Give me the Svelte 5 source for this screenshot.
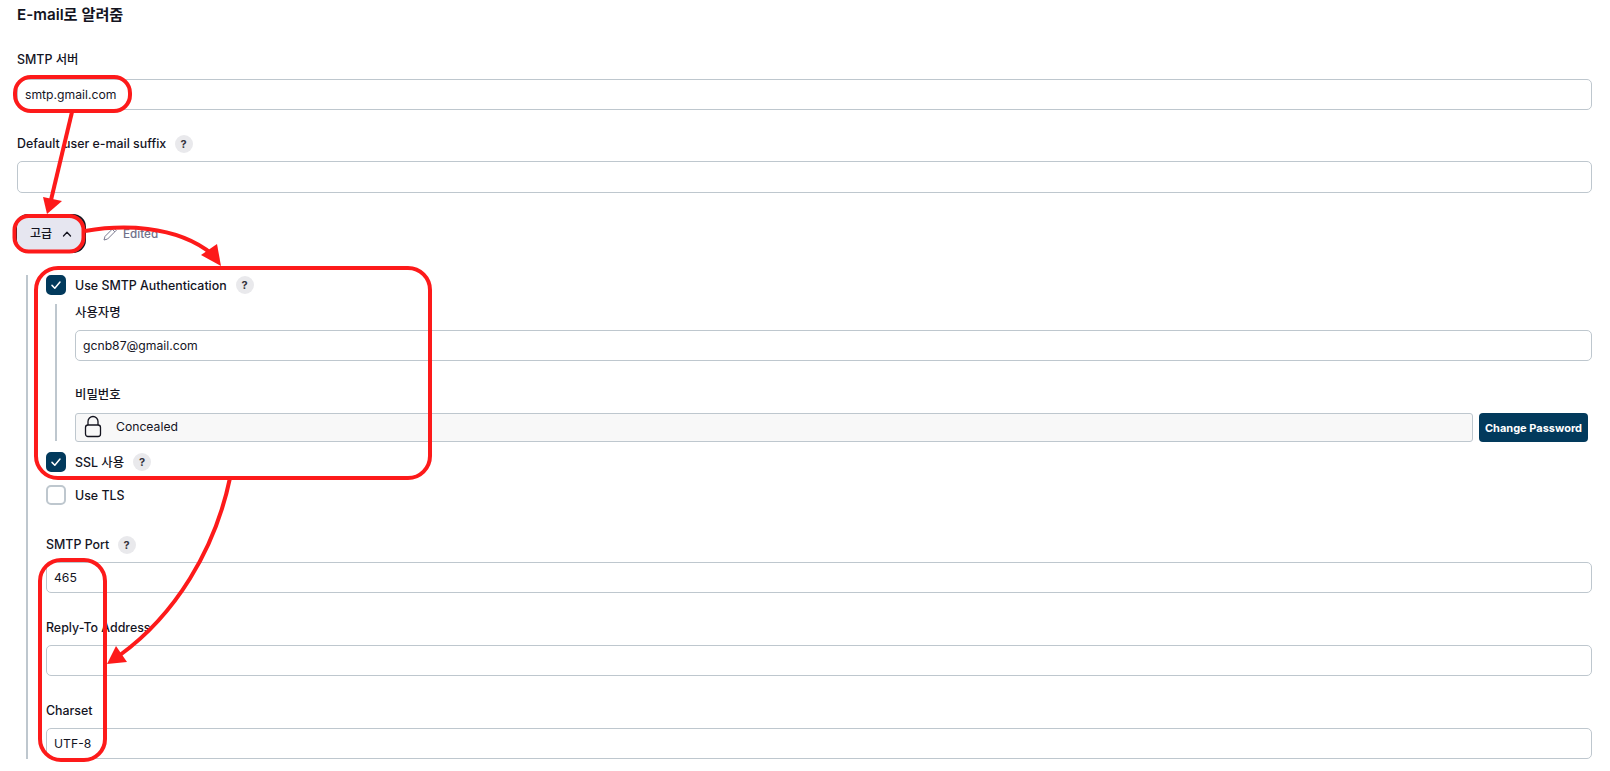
<script lang="ts">
	type Field = { label: string; value: string; help?: boolean };

	const lowerFields: Field[] = [
		{ label: 'SMTP Port', value: '465', help: true },
		{ label: 'Reply-To Address', value: '' },
		{ label: 'Charset', value: 'UTF-8' }
	];
</script>

{#snippet help()}
	<span class="help">?</span>
{/snippet}

{#snippet check(on: boolean, label: string, hasHelp: boolean)}
	<div class="check-row">
		<span class="box" class:on>
			{#if on}
				<svg width="12" height="12" viewBox="0 0 12 12"><path d="M2 6.4 4.8 9.2 10 3" fill="none" stroke="#fff" stroke-width="1.5" stroke-linecap="round" stroke-linejoin="round" /></svg>
			{/if}
		</span>
		<span class="check-label">{label}</span>
		{#if hasHelp}{@render help()}{/if}
	</div>
{/snippet}

<main class="page">
	<h2>E-mail로 알려줌</h2>

	<div class="label first">SMTP 서버</div>
	<div class="input">smtp.gmail.com</div>

	<div class="label suffix">Default user e-mail suffix {@render help()}</div>
	<div class="input tall"></div>

	<div class="adv-row">
		<button class="adv"><span class="adv-text">고급</span>
			<svg width="10" height="10" viewBox="0 0 10 10"><path d="M1.5 7 5 3.3 8.5 7" fill="none" stroke="#14141f" stroke-width="1.3" stroke-linecap="round" stroke-linejoin="round" /></svg>
		</button>
		<span class="edited">
			<svg width="16" height="16" viewBox="0 0 16 16"><path d="M2 14 3 10.4 11.6 1.8 14.2 4.4 5.6 13Z M10.2 3.2 12.8 5.8" fill="none" stroke="#7a7a90" stroke-width="1" stroke-linejoin="round" /></svg>
			Edited
		</span>
	</div>

	<section class="advanced">
		{@render check(true, 'Use SMTP Authentication', true)}
		<div class="auth">
			<div class="label">사용자명</div>
			<div class="input">gcnb87@gmail.com</div>
			<div class="label pw-label">비밀번호</div>
			<div class="pw-row">
				<div class="concealed">
					<svg width="20" height="24" viewBox="0 0 20 24"><path d="M5 11V7.5a5 5 0 0 1 10 0V11" fill="none" stroke="#14141f" stroke-width="1.3" /><rect x="2.5" y="11" width="15" height="11.5" rx="2.5" fill="none" stroke="#14141f" stroke-width="1.3" /></svg>
					<span>Concealed</span>
				</div>
				<button class="change">Change Password</button>
			</div>
		</div>
		<div class="ssl">{@render check(true, 'SSL 사용', true)}</div>
		<div class="tls">{@render check(false, 'Use TLS', false)}</div>

		<div class="lower">
			{#each lowerFields as f (f.label)}
				<div class="field">
					<div class="label">{f.label} {#if f.help}{@render help()}{/if}</div>
					<div class="input">{f.value}</div>
				</div>
			{/each}
		</div>
	</section>

	<svg class="marks" width="1610" height="771" viewBox="0 0 1610 771">
		<g fill="none" stroke="#fd1a1a" stroke-width="4">
			<rect x="15" y="77" width="115" height="34" rx="16" />
			<rect x="14.5" y="216" width="69" height="35.5" rx="14" />
			<rect x="36" y="268" width="394" height="210" rx="22" />
			<rect x="40" y="560" width="65" height="200" rx="21" />
			<path d="M72 112 51 200" />
			<path d="M85 231C120 225 175 224 212 254" />
			<path d="M230 478C215 550 175 615 120 655" />
		</g>
		<g fill="#fd1a1a">
			<path d="M47 214 43 197 62 201Z" />
			<path d="M221 266 201 255 217 244Z" />
			<path d="M107 664 116 646 127 662Z" />
		</g>
	</svg>
</main>

<style>
	:global(body) {
		margin: 0;
		background: #fff;
	}
	.page {
		position: relative;
		height: 771px;
		overflow: hidden;
		box-sizing: border-box;
		padding: 0 18px 0 17px;
		font-family: Inter, 'Noto Sans CJK KR', sans-serif;
		font-size: 12.4px;
		color: #14141f;
	}
	.marks {
		position: absolute;
		top: 0;
		left: 0;
	}
	h2 {
		margin: 0;
		padding-top: 5px;
		font-size: 15.2px;
		line-height: 20px;
		font-weight: 600;
	}
	.label {
		height: 18px;
		line-height: 18px;
		font-weight: 450;
		font-size: 12.4px;
		display: flex;
		align-items: center;
		gap: 5px;
		white-space: pre-wrap;
	}
	.first {
		margin-top: 26px;
		margin-bottom: 10px;
	}
	.suffix {
		margin-top: 25px;
		margin-bottom: 8px;
	}
	.input {
		box-sizing: border-box;
		height: 31px;
		border: 1px solid #bec7ce;
		border-radius: 5px;
		padding: 0 7px;
		line-height: 29px;
		font-size: 12.2px;
	}
	.tall {
		height: 32px;
	}
	.help {
		display: inline-flex;
		align-items: center;
		justify-content: center;
		width: 18px;
		height: 18px;
		border-radius: 50%;
		background: #e9e9ec;
		color: #33333d;
		font-size: 11px;
		font-weight: 700;
	}
	.adv-row {
		display: flex;
		align-items: center;
		margin-top: 23px;
		height: 35px;
	}
	.adv {
		display: flex;
		align-items: center;
		gap: 10px;
		box-sizing: border-box;
		width: 67px;
		height: 35px;
		padding: 0 0 0 13px;
		border: 0;
		border-radius: 11px;
		background: #e6e6f0;
		box-shadow: 0 0 0 2px #14141f;
		color: #14141f;
		font: 500 12px Inter, 'Noto Sans CJK KR', sans-serif;
	}
	.adv-text {
		margin-top: -2px;
	}
	.edited {
		display: flex;
		align-items: center;
		gap: 5px;
		margin-left: 18px;
		color: #71718a;
		font-size: 11.7px;
		font-weight: 500;
	}
	.advanced {
		margin: 24px 0 0 9px;
		padding-left: 18px;
		border-left: 2px solid #bec7ce;
		height: 484px;
	}
	.check-row {
		display: flex;
		align-items: center;
		height: 20px;
		gap: 9px;
		font-weight: 450;
	}
	.box {
		box-sizing: border-box;
		display: flex;
		align-items: center;
		justify-content: center;
		width: 20px;
		height: 20px;
		border: 2px solid #bec7ce;
		border-radius: 5px;
	}
	.box.on {
		background: #023a5c;
		border-color: #023a5c;
	}
	.auth {
		margin: 9px 0 0 9px;
		padding-left: 18px;
		border-left: 2px solid #bec7ce;
		height: 137px;
	}
	.auth .label {
		margin-bottom: 8px;
	}
	.auth .pw-label {
		margin-top: 25px;
		margin-bottom: 9px;
	}
	.pw-row {
		display: flex;
		align-items: center;
		gap: 6px;
		padding-right: 4px;
	}
	.concealed {
		flex: 1;
		box-sizing: border-box;
		height: 29px;
		display: flex;
		align-items: center;
		gap: 13px;
		padding: 0 0 3px 7px;
		border: 1px solid #bec7ce;
		border-radius: 3px;
		background: #f8f8f8;
		font-size: 12.2px;
	}
	.change {
		width: 109px;
		height: 29px;
		padding: 0;
		border: 0;
		border-radius: 4px;
		background: #023a5c;
		color: #fff;
		font: 700 11px Inter, sans-serif;
	}
	.ssl {
		margin-top: 11px;
	}
	.tls {
		margin-top: 13px;
	}
	.lower {
		margin-top: 31px;
	}
	.field {
		margin-bottom: 26px;
	}
	.field .label {
		margin-bottom: 8px;
	}
</style>
